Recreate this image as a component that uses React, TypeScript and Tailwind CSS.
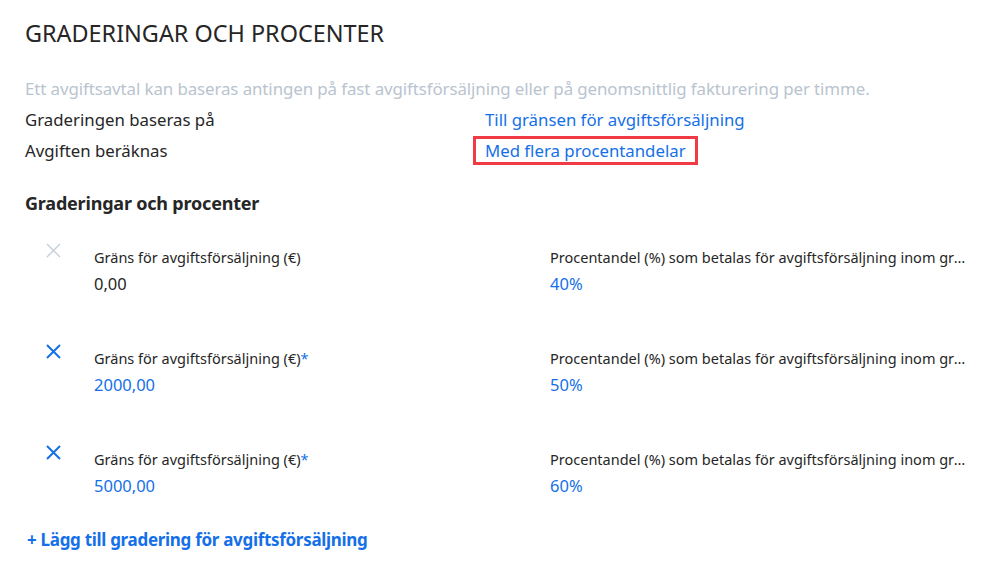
import React from 'react';

const tiers = [
  { limit: '0,00', percent: '40%', locked: true },
  { limit: '2000,00', percent: '50%', locked: false },
  { limit: '5000,00', percent: '60%', locked: false },
];

const CrossIcon = ({ muted }: { muted: boolean }) => (
  <svg width="15" height="15" viewBox="0 0 15 15" className={muted ? 'text-[#c3cbd4]' : 'text-[#1570e8]'}>
    <path d="M1 1 L14 14 M14 1 L1 14" stroke="currentColor" strokeWidth={muted ? 1.3 : 2} fill="none" />
  </svg>
);

export default function App() {
  return (
    <div className="w-[1000px] h-[561px] overflow-hidden bg-white text-[#262626] font-['Noto_Sans',sans-serif]">
      <div className="pl-[25px] pt-[17px]">
        <h1 className="text-[23.4px] leading-[32px] font-normal">GRADERINGAR OCH PROCENTER</h1>

        <p className="mt-[24px] text-[16.9px] leading-[31px] text-[#b9c4cf] tracking-[-0.1px]">
          Ett avgiftsavtal kan baseras antingen på fast avgiftsförsäljning eller på genomsnittlig fakturering per timme.
        </p>

        <div className="grid grid-cols-[460px_1fr] text-[16.8px] leading-[31px]">
          <span>Graderingen baseras på</span>
          <span className="text-[#1570e8]">Till gränsen för avgiftsförsäljning</span>
          <span>Avgiften beräknas</span>
          <span>
            <span className="inline-block ml-[-12px] px-[9px] border-[3px] border-[#f03a44] leading-[23px] text-[#1570e8]">
              Med flera procentandelar
            </span>
          </span>
        </div>

        <h2 className="mt-[23px] text-[18px] leading-[28px] font-bold tracking-[-0.2px]">Graderingar och procenter</h2>

        <div className="mt-[26px] flex flex-col gap-[48px] pr-[34px]">
          {tiers.map((t) => (
            <div key={t.limit} className="flex">
              <div className="w-[69px] pl-[21px]">
                <CrossIcon muted={t.locked} />
              </div>
              <div className="w-[456px] pt-[4px]">
                <div className="text-[14.5px] leading-[20px]">
                  Gräns för avgiftsförsäljning (€)
                  {!t.locked && <span className="text-[#1570e8]">*</span>}
                </div>
                <div className={`mt-[5px] text-[16.5px] leading-[24px] ${t.locked ? 'text-[#262626]' : 'text-[#1570e8]'}`}>
                  {t.limit}
                </div>
              </div>
              <div className="flex-1 min-w-0 pt-[4px]">
                <div className="text-[14.5px] leading-[20px] truncate">
                  Procentandel (%) som betalas för avgiftsförsäljning inom graderingen
                </div>
                <div className="mt-[5px] text-[16.5px] leading-[24px] text-[#1570e8]">{t.percent}</div>
              </div>
            </div>
          ))}
        </div>

        <button className="mt-[29px] ml-[2px] text-[17px] leading-[26px] font-bold text-[#1570e8] tracking-[-0.3px]">
          + Lägg till gradering för avgiftsförsäljning
        </button>
      </div>
    </div>
  );
}
